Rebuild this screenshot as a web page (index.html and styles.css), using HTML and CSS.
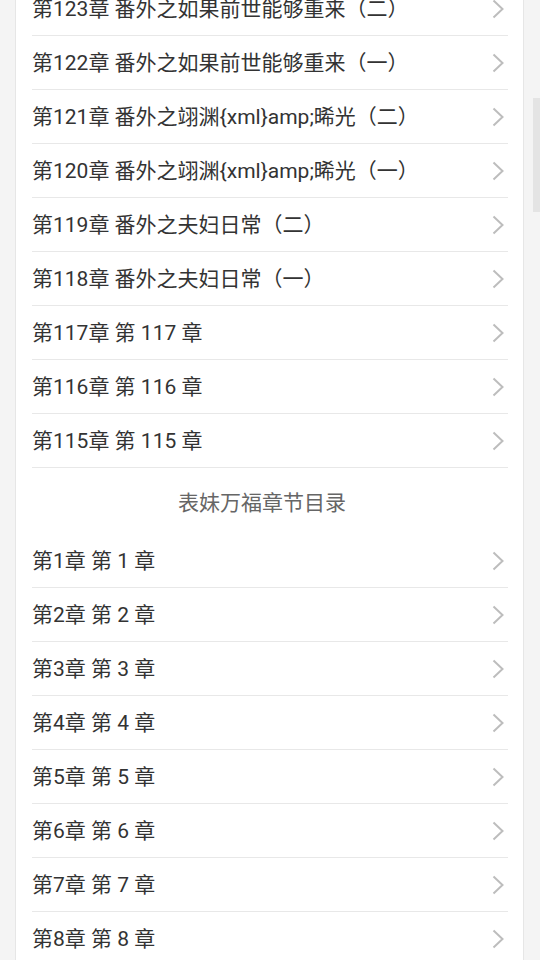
FILE: index.html
```html
<!DOCTYPE html>
<html lang="zh-CN">
<head>
  <meta charset="UTF-8">
  <meta name="viewport" content="width=device-width, initial-scale=1.0">
  <title>表妹万福章节目录</title>
  <link rel="stylesheet" href="styles.css">
</head>
<body>
  <div class="page">
    <div class="card">
      <ul class="chapter-list">
        <li class="chapter"><span class="chapter-title">第123章 番外之如果前世能够重来（二）</span><svg class="arrow" viewBox="0 0 12 20"><polyline points="1.5,1.5 10.5,10 1.5,18.5"/></svg></li>
        <li class="chapter"><span class="chapter-title">第122章 番外之如果前世能够重来（一）</span><svg class="arrow" viewBox="0 0 12 20"><polyline points="1.5,1.5 10.5,10 1.5,18.5"/></svg></li>
        <li class="chapter"><span class="chapter-title">第121章 番外之翊渊{xml}amp;晞光（二）</span><svg class="arrow" viewBox="0 0 12 20"><polyline points="1.5,1.5 10.5,10 1.5,18.5"/></svg></li>
        <li class="chapter"><span class="chapter-title">第120章 番外之翊渊{xml}amp;晞光（一）</span><svg class="arrow" viewBox="0 0 12 20"><polyline points="1.5,1.5 10.5,10 1.5,18.5"/></svg></li>
        <li class="chapter"><span class="chapter-title">第119章 番外之夫妇日常（二）</span><svg class="arrow" viewBox="0 0 12 20"><polyline points="1.5,1.5 10.5,10 1.5,18.5"/></svg></li>
        <li class="chapter"><span class="chapter-title">第118章 番外之夫妇日常（一）</span><svg class="arrow" viewBox="0 0 12 20"><polyline points="1.5,1.5 10.5,10 1.5,18.5"/></svg></li>
        <li class="chapter"><span class="chapter-title">第117章 第 117 章</span><svg class="arrow" viewBox="0 0 12 20"><polyline points="1.5,1.5 10.5,10 1.5,18.5"/></svg></li>
        <li class="chapter"><span class="chapter-title">第116章 第 116 章</span><svg class="arrow" viewBox="0 0 12 20"><polyline points="1.5,1.5 10.5,10 1.5,18.5"/></svg></li>
        <li class="chapter"><span class="chapter-title">第115章 第 115 章</span><svg class="arrow" viewBox="0 0 12 20"><polyline points="1.5,1.5 10.5,10 1.5,18.5"/></svg></li>
      </ul>

      <h2 class="list-heading">表妹万福章节目录</h2>

      <ul class="chapter-list">
        <li class="chapter"><span class="chapter-title">第1章 第 1 章</span><svg class="arrow" viewBox="0 0 12 20"><polyline points="1.5,1.5 10.5,10 1.5,18.5"/></svg></li>
        <li class="chapter"><span class="chapter-title">第2章 第 2 章</span><svg class="arrow" viewBox="0 0 12 20"><polyline points="1.5,1.5 10.5,10 1.5,18.5"/></svg></li>
        <li class="chapter"><span class="chapter-title">第3章 第 3 章</span><svg class="arrow" viewBox="0 0 12 20"><polyline points="1.5,1.5 10.5,10 1.5,18.5"/></svg></li>
        <li class="chapter"><span class="chapter-title">第4章 第 4 章</span><svg class="arrow" viewBox="0 0 12 20"><polyline points="1.5,1.5 10.5,10 1.5,18.5"/></svg></li>
        <li class="chapter"><span class="chapter-title">第5章 第 5 章</span><svg class="arrow" viewBox="0 0 12 20"><polyline points="1.5,1.5 10.5,10 1.5,18.5"/></svg></li>
        <li class="chapter"><span class="chapter-title">第6章 第 6 章</span><svg class="arrow" viewBox="0 0 12 20"><polyline points="1.5,1.5 10.5,10 1.5,18.5"/></svg></li>
        <li class="chapter"><span class="chapter-title">第7章 第 7 章</span><svg class="arrow" viewBox="0 0 12 20"><polyline points="1.5,1.5 10.5,10 1.5,18.5"/></svg></li>
        <li class="chapter"><span class="chapter-title">第8章 第 8 章</span><svg class="arrow" viewBox="0 0 12 20"><polyline points="1.5,1.5 10.5,10 1.5,18.5"/></svg></li>
      </ul>
    </div>
  </div>

  <div class="scroll-thumb"></div>
</body>
</html>
```

FILE: styles.css
```css
html, body {
  height: 100%;
  overflow: hidden;
}

body {
  margin: 0;
  padding: 0;
  background-color: #f4f4f4;
  font-family: Roboto, "Noto Sans CJK SC", sans-serif;
  color: #333;
}

/* list is scrolled down a bit, first row is cut off at the top */
.page {
  margin-top: -18px;
  padding: 0 16px 0 15px;
}

.card {
  background-color: #fff;
  border-left: 1px solid #e6e6e6;
  border-right: 1px solid #e6e6e6;
  padding: 0 15px 0 16px;
}

.chapter-list {
  list-style: none;
  margin: 0;
  padding: 0;
}

.chapter {
  display: flex;
  align-items: center;
  justify-content: space-between;
  box-sizing: border-box;
  height: 54px;
  padding-bottom: 4px;
  border-bottom: 1px solid #e8e8e8;
  font-size: 21px;
}

.chapter-title {
  white-space: nowrap;
  overflow: hidden;
}

.arrow {
  flex: none;
  width: 12px;
  height: 20px;
  margin-top: 4px;
  margin-right: 4px;
}

.arrow polyline {
  fill: none;
  stroke: #bdbdbd;
  stroke-width: 2;
}

.list-heading {
  margin: 0;
  height: 66px;
  padding-right: 16px;
  display: flex;
  align-items: center;
  justify-content: center;
  font-size: 21px;
  font-weight: normal;
  color: #666;
}

/* overlay scrollbar of the webview */
.scroll-thumb {
  position: fixed;
  top: 98px;
  right: 0;
  width: 7px;
  height: 114px;
  background-color: #e4e4e4;
}
```
